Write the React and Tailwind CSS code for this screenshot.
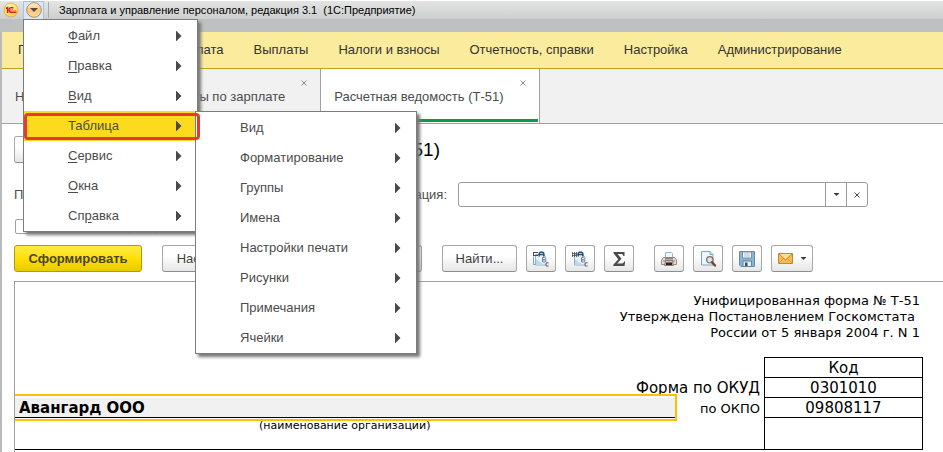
import React from "react";

const navItems = [
  "Главное",
  "Кадры",
  "Зарплата",
  "Выплаты",
  "Налоги и взносы",
  "Отчетность, справки",
  "Настройка",
  "Администрирование",
];

const mainMenu = [
  ["", "Ф", "айл"],
  ["", "П", "равка"],
  ["", "В", "ид"],
  ["Таблица", "", ""],
  ["", "С", "ервис"],
  ["", "О", "кна"],
  ["Сп", "р", "авка"],
];

const tableMenu = [
  "Вид",
  "Форматирование",
  "Группы",
  "Имена",
  "Настройки печати",
  "Рисунки",
  "Примечания",
  "Ячейки",
];

function Arrow() {
  return (
    <svg className="h-[10px] w-[6px] shrink-0" viewBox="0 0 6 10" fill="#4a4a4a" aria-hidden="true">
      <path d="M0 0h.5L5.500 5 .5 10H0z" />
    </svg>
  );
}

function Logo() {
  return (
    <svg className="h-4 w-4" viewBox="0 0 16 16" aria-hidden="true">
      <defs>
        <radialGradient id="logoFill" cx="0.4" cy="0.3" r="0.8">
          <stop offset="0" stopColor="#fffbd0" />
          <stop offset="0.6" stopColor="#ffe34d" />
          <stop offset="1" stopColor="#f0b93c" />
        </radialGradient>
      </defs>
      <circle cx="8" cy="8" r="7" fill="url(#logoFill)" stroke="#dba765" strokeWidth="0.8" />
      <path d="M3 6.5 4.6 5.6V11" fill="none" stroke="#d8201c" strokeWidth="1.5" />
      <path d="M10.4 6.4A2.5 2.5 0 1 0 9 10.4H13.4" fill="none" stroke="#d8201c" strokeWidth="1.4" />
      <path d="M9.6 7.7A1.1 1.1 0 1 0 9 9H13.4" fill="none" stroke="#d8201c" strokeWidth="0.7" />
    </svg>
  );
}

function MenuOrb() {
  return (
    <svg className="h-4 w-4" viewBox="0 0 16 16" aria-hidden="true">
      <defs>
        <linearGradient id="orbFill" x1="0" y1="0" x2="0" y2="1">
          <stop offset="0" stopColor="#fff3dc" />
          <stop offset="0.5" stopColor="#f6c680" />
          <stop offset="1" stopColor="#fbdc9c" />
        </linearGradient>
      </defs>
      <circle cx="8" cy="8" r="7.3" fill="url(#orbFill)" stroke="#b98d5c" strokeWidth="1" />
      <path d="M4 6h8L8 10z" fill="#5c4a38" />
    </svg>
  );
}

function SheetLettersIcon({ grid }) {
  return (
    <svg className="h-4 w-4" viewBox="0 0 16 16" aria-hidden="true">
      <path d="M2.500 3.500H11l2 3v7.500H2.500z" fill="#e6f2fb" stroke="#8db4cf" />
      <path d="M3 8l8 6H3z" fill="#bcd8ec" />
      {grid ? (
        <path d="M0 2.500h5M0 4.500h5M.5 1v5M2.500 1v5M4.500 1v5" stroke="#4c4c4c" strokeWidth="0.800" fill="none" />
      ) : (
        <>
          <path d="M.5 5.500v8h2" stroke="#7ea5bf" fill="none" />
          <path d="M0 1.500h5M0 4.500h5M.5 1v4" stroke="#4c4c4c" fill="none" />
        </>
      )}
      <path d="M6.200 5.500V2.200l1-1h2.600l1 1v3.300M6.200 3.600h4.600" stroke="#234f7d" strokeWidth="1.500" fill="none" />
      <path d="M8.500 6h5v5.500h-5z" fill="#f3f7fa" />
      <path d="M9.500 6.500v4.500h2.200a1.100 1.100 0 0 0 0-2.250H9.500h2a1.100 1.100 0 0 0 0-2.250z" stroke="#6f8294" fill="none" />
      <path d="M15.600 12a1.700 1.700 0 1 0 0 2.800" stroke="#6f7d88" fill="none" strokeWidth="1.200" />
    </svg>
  );
}

function SigmaIcon() {
  return (
    <svg className="h-4 w-4" viewBox="0 0 16 16" aria-hidden="true">
      <path d="M2.500 1h11v4h-1.200c-.2-1.400-.9-1.900-2.300-1.900H6.600l3.900 4.700-4.400 4.800h4.200c1.700 0 2.400-.6 2.800-2.100h1.100L13.500 15H2.300v-1.300l5-5.400-4.800-6z" fill="#4b4b4b" />
    </svg>
  );
}

function PrinterIcon() {
  return (
    <svg className="h-4 w-4" viewBox="0 0 16 16" aria-hidden="true">
      <path d="M4.500 7V1.500h6l1 1v4.500" fill="#eef7fd" stroke="#8fbad2" />
      <path d="M2.500 6.500h11l2 2.500v4.500h-15V9z" fill="#e2dcd8" stroke="#978c85" />
      <path d="M4 6.500h8v2H4z" fill="#8b817b" />
      <path d="M2 10h3M11 10h3" stroke="#d8634c" />
      <path d="M4.500 9.500h7l.8 5H3.700z" fill="#c9c0ba" stroke="#857a74" />
      <path d="M5 11.500h6v2.500H5z" fill="#2b2523" />
    </svg>
  );
}

function PreviewIcon() {
  return (
    <svg className="h-4 w-4" viewBox="0 0 16 16" aria-hidden="true">
      <path d="M1.500.5H10l3 3v10.500H1.500z" fill="#edf6fc" stroke="#78a6c4" />
      <path d="M10 .5v3h3" fill="#cfe3f0" stroke="#78a6c4" />
      <circle cx="9.800" cy="8.800" r="3.200" fill="#d3e4ef" stroke="#8a6554" strokeWidth="1.200" />
      <path d="m12 11.200 3 3.300" stroke="#7d4024" strokeWidth="2.400" strokeLinecap="round" />
    </svg>
  );
}

function SaveIcon() {
  return (
    <svg className="h-4 w-4" viewBox="0 0 16 16" aria-hidden="true">
      <path d="M.5.5h15v15H2L.5 14z" fill="#8db3cf" stroke="#5f8caf" />
      <path d="M3.500 1h9v6h-9z" fill="#f6fafc" stroke="#6d98b7" />
      <path d="M5 3h6M5 5h6" stroke="#a9bfce" />
      <path d="M4 10h8.500v5.500H4z" fill="#e6ebee" stroke="#64859c" />
      <path d="M6 11.500h2.500V15H6z" fill="#33536b" />
    </svg>
  );
}

function MailIcon() {
  return (
    <svg className="h-[11px] w-[15px]" viewBox="0 0 15 11" aria-hidden="true">
      <path d="M.5.5h14v10H.5z" fill="#f3bd55" stroke="#c78a1f" />
      <path d="m1 10 5-5M14 10 9 5" stroke="#d49b36" fill="none" />
      <path d="m1 1 6.500 6L14 1" stroke="#c78a1f" fill="#fbdc92" />
    </svg>
  );
}

function DownArrow() {
  return (
    <svg className="h-[3px] w-[5px]" viewBox="0 0 5 3" fill="#3c3c3c" aria-hidden="true">
      <path d="M0 0h5v.5L2.500 3 0 .5z" />
    </svg>
  );
}

function Cross({ color }) {
  return (
    <svg className="h-[6px] w-[6px]" viewBox="0 0 6 6" stroke={color} aria-hidden="true">
      <path d="m.5.500 5 5M5.500.500l-5 5" />
    </svg>
  );
}

const buttonBase =
  "flex h-[27px] shrink-0 items-center justify-center rounded-[3px] border border-[#a8a8a8] border-b-[#8e8e8e] bg-linear-to-b from-white from-40% to-[#e6e6e6] text-[#3f3f3f]";

function ToolButton({ label, children }) {
  return (
    <button type="button" aria-label={label} className={buttonBase + " w-[30px]"}>
      {children}
    </button>
  );
}

function TitleBar() {
  return (
    <header className="flex h-8 items-start border-t border-white bg-linear-to-b from-[#e4e4e4] to-[#cccdcd] to-60%">
      <div className="flex h-full w-full items-start bg-linear-to-b from-transparent from-[18px] to-[#bfc0c1] to-[18px]">
        <div className="flex h-[18px] items-center pl-[3px]">
          <Logo />
          <button type="button" aria-label="Главное меню" className="ml-1 flex h-[19px] w-[21px] items-center justify-center border border-[#a6c0e6] bg-[#dbe6f7]">
            <MenuOrb />
          </button>
          <span className="ml-1 h-4 w-px bg-[#a9a9a9]" />
          <h1 className="ml-[10px] text-[11px] leading-4 whitespace-pre text-black">
            {"Зарплата и управление персоналом, редакция 3.1  (1С:Предприятие)"}
          </h1>
        </div>
      </div>
    </header>
  );
}

function Tab({ children, active, closable }) {
  return (
    <div
      className={
        "relative flex h-[54px] items-center border-r border-[#a0a0a0] pt-[2px] pl-[13px] whitespace-nowrap " +
        (closable ? "pr-[35px] " : "pr-[9px] ") +
        (active ? "bg-white" : "")
      }
    >
      <button type="button" role="tab" aria-selected={!!active} className="text-[#4c4c4c]">
        {children}
      </button>
      {closable && (
        <button type="button" aria-label="Закрыть" className="absolute top-[11px] right-[13px]">
          <Cross color="#8c8c8c" />
        </button>
      )}
      {active && <span className="absolute right-px bottom-px left-0 h-[3px] bg-[#0a9a4e]" />}
    </div>
  );
}

function Report() {
  return (
    <section className="ml-3 flex-1 border-t border-l border-[#a0a0a0] pr-5 font-['Verdana','DejaVu_Sans',sans-serif] text-black">
      <div className="pt-[11px] pr-[3px] text-right text-[13px] leading-4">
        <p>Унифицированная форма № Т-51</p>
        <p className="pr-[5px]">Утверждена Постановлением Госкомстата</p>
        <p>России от 5 января 2004 г. N 1</p>
      </div>
      <table className="mt-4 w-full table-fixed border-collapse text-[15px] leading-[17px]">
        <colgroup>
          <col />
          <col className="w-[90px]" />
          <col className="w-[158px]" />
        </colgroup>
        <tbody>
          <tr className="h-5">
            <td colSpan={2} />
            <th scope="col" className="border border-black p-0 pt-[2px] text-center font-normal">Код</th>
          </tr>
          <tr className="h-5">
            <td colSpan={2} className="p-0 pt-[2px] pr-1 text-right">Форма по ОКУД</td>
            <td className="border border-black p-0 pt-[2px] text-center">0301010</td>
          </tr>
          <tr className="h-5">
            <td className="relative border-b border-black bg-[#f1f1f1] p-0 pt-[2px] pl-1 font-bold">
              Авангард ООО
              <span className="absolute -top-1 -right-[2px] -bottom-1 left-0 border-2 border-l-0 border-[#fbc102]" />
            </td>
            <td className="p-0 pt-[2px] pr-1 text-right text-[13px]">по ОКПО</td>
            <td className="border border-black p-0 pt-[2px] text-center">09808117</td>
          </tr>
          <tr className="h-8">
            <td className="border-b border-black p-0 text-center align-top text-[11px] leading-[15px]">
              (наименование организации)
            </td>
            <td className="border-b border-black p-0" />
            <td className="border border-black p-0" />
          </tr>
        </tbody>
      </table>
    </section>
  );
}

function Menus() {
  return (
    <>
      <div role="menu" className="absolute top-[19px] left-[23px] w-[175px] border border-[#7c7c7c] bg-white pt-px shadow-[3px_3px_3px_#777]">
        {mainMenu.map(([before, key, after]) => (
          <button
            key={before + key + after}
            type="button"
            role="menuitem"
            className={
              "flex h-[30px] w-full items-center justify-between pr-[15px] pl-11 text-[#4c4c4c] " +
              (before === "Таблица" ? "bg-[#fcdb1f]" : "")
            }
          >
            <span>
              {before}
              <span className="underline underline-offset-2">{key}</span>
              {after}
            </span>
            <Arrow />
          </button>
        ))}
      </div>
      <div role="menu" className="absolute top-[111px] left-[195px] w-[222px] border border-[#7c7c7c] bg-white pt-px shadow-[3px_3px_3px_#777]">
        {tableMenu.map((item) => (
          <button key={item} type="button" role="menuitem" className="flex h-[30px] w-full items-center justify-between pr-[15px] pl-11 text-[#4c4c4c]">
            <span>{item}</span>
            <Arrow />
          </button>
        ))}
      </div>
      <span className="pointer-events-none absolute top-[113px] left-[24px] h-[27px] w-[176px] rounded-[4px] border-3 border-[#e63a30]" />
    </>
  );
}

export default function App() {
  return (
    <div className="relative flex min-h-screen flex-col overflow-hidden bg-white font-['Liberation_Sans',Arial,sans-serif] text-[13px] leading-4">
      <TitleBar />
      <div className="flex flex-1 flex-col border-l-2 border-[#b9b9b9]">
        <nav className="flex h-[37px] items-center gap-[30px] border-b border-[#c0a21c] bg-[#fbeb9d] pl-4 whitespace-nowrap text-[#333]">
          {navItems.map((item) => (
            <a key={item} href="#">{item}</a>
          ))}
        </nav>
        <div role="tablist" className="flex h-[55px] border-b border-[#a0a0a0] bg-[#f1f1f1]">
          <Tab>Начальная страница</Tab>
          <Tab closable>Отчеты по зарплате</Tab>
          <Tab active closable>Расчетная ведомость (Т-51)</Tab>
        </div>
        <main className="flex flex-1 flex-col">
          <div className="flex items-center gap-3 pt-3 pl-3">
            <div className="flex">
              <button type="button" aria-label="Назад" className={buttonBase + " w-[30px]"}>←</button>
              <button type="button" aria-label="Вперед" className={buttonBase + " w-[30px]"}>→</button>
            </div>
            <h2 className="w-[354px] text-right text-[19px] leading-6 text-black">Расчетная ведомость (Т-51)</h2>
          </div>
          <div className="mt-[19px] flex h-[25px] items-center pl-3 text-[#4c4c4c]">
            <span>Период:</span>
            <label htmlFor="organization" className="ml-auto text-right">Организация:</label>
            <div className="mr-[75px] ml-[11px] flex h-[25px] w-[410px] shrink-0 rounded-[3px] border border-[#9c9c9c] bg-white">
              <input id="organization" type="text" className="min-w-0 flex-1 px-2 outline-none" />
              <button type="button" aria-label="Выбрать" className="flex w-[21px] items-center justify-center border-l border-[#9c9c9c]">
                <DownArrow />
              </button>
              <button type="button" aria-label="Очистить" className="flex w-[21px] items-center justify-center border-l border-[#9c9c9c]">
                <Cross color="#4c4c4c" />
              </button>
            </div>
          </div>
          <label className="mt-[11px] flex h-4 items-center gap-2 pl-[13px] text-[#4c4c4c]">
            <input type="checkbox" className="h-[15px] w-[15px] appearance-none rounded-[2px] border border-[#a0a0a0] bg-white" />
            Разбить по подразделениям
          </label>
          <div className="flex items-start pt-[11px] pb-[9px] pl-3">
            <button type="button" className="flex h-[27px] w-32 items-center justify-center rounded-[3px] border border-[#b09a10] bg-linear-to-b from-[#ffea3e] via-[#ffe000] to-[#e8cb00] font-bold text-[#4a4420]">
              Сформировать
            </button>
            <button type="button" className={buttonBase + " ml-5 w-[104px]"}>Настройки...</button>
            <button type="button" className={buttonBase + " ml-[9px] w-[147px]"}>Развернуть до</button>
            <button type="button" className={buttonBase + " ml-5 w-[75px]"}>Найти...</button>
            <div className="ml-[9px] flex gap-[9px]">
              <ToolButton label="Развернуть группы"><SheetLettersIcon /></ToolButton>
              <ToolButton label="Свернуть группы"><SheetLettersIcon grid /></ToolButton>
              <ToolButton label="Сумма"><SigmaIcon /></ToolButton>
            </div>
            <div className="ml-5 flex gap-[9px]">
              <ToolButton label="Печать"><PrinterIcon /></ToolButton>
              <ToolButton label="Предварительный просмотр"><PreviewIcon /></ToolButton>
              <ToolButton label="Сохранить"><SaveIcon /></ToolButton>
              <button type="button" aria-label="Отправить" className={buttonBase + " w-[42px] gap-2"}>
                <MailIcon />
                <DownArrow />
              </button>
            </div>
          </div>
          <Report />
        </main>
      </div>
      <Menus />
    </div>
  );
}
